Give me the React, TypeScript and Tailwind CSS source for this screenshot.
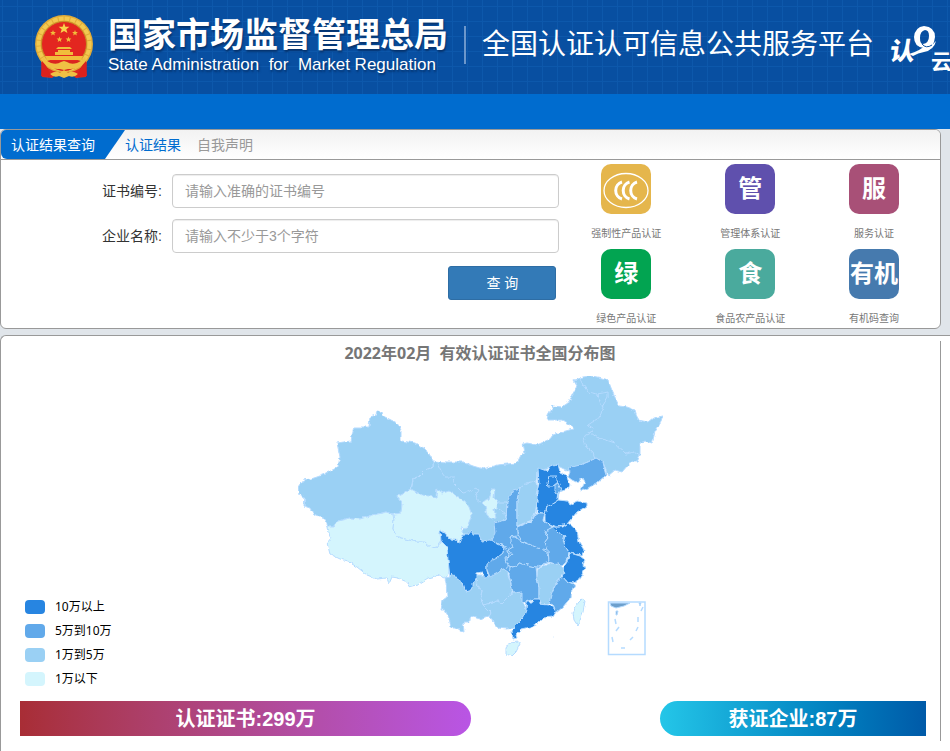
const LEVELS = {
  a: "#2785e1",
  b: "#61a9ea",
  c: "#9ad0f4",
  d: "#d4f5fd",
};

const LEGEND = [
  { color: "bg-[#2785e1]", label: "10万以上" },
  { color: "bg-[#61a9ea]", label: "5万到10万" },
  { color: "bg-[#9ad0f4]", label: "1万到5万" },
  { color: "bg-[#d4f5fd]", label: "1万以下" },
];

const CATEGORIES = [
  { mark: "CCC", label: "强制性产品认证", color: "bg-[#e5b64c]" },
  { mark: "管", label: "管理体系认证", color: "bg-[#5f50ad]" },
  { mark: "服", label: "服务认证", color: "bg-[#a85077]" },
  { mark: "绿", label: "绿色产品认证", color: "bg-[#02a451]" },
  { mark: "食", label: "食品农产品认证", color: "bg-[#4aaa9d]" },
  { mark: "有机", label: "有机码查询", color: "bg-[#467aae]" },
];

// 省份轮廓
const PROVINCES: { name: string; level: keyof typeof LEVELS; points: string }[] = [
  { name: "中部", level: "b", points: "208,185 222,172 232,165 262,165 262,195 246,204 222,206 205,212 200,208" },
  { name: "北部", level: "c", points: "143,96 157,97 173,97 183,101 193,104 207,100 227,98 231,90 235,87 233,79 237,78 247,80 260,74 263,70 272,67 283,64 280,60 272,55 257,55 258,50 263,41 272,42 278,38 285,26 287,20 284,15 293,12 302,11 312,13 318,15 323,28 329,41 337,42 345,45 348,55 358,57 363,53 373,51 371,57 365,67 362,78 355,76 350,78 350,90 347,97 342,97 338,100 332,107 325,105 318,111 313,97 306,93 278,106 268,101 248,106 247,116 230,123 217,137 216,155 206,158 207,168 201,178 191,178 181,168 170,177 178,150 170,140 147,136 121,128 123,114 128,112 135,105 143,102" },
  { name: "新疆", level: "c", points: "8,122 13,115 21,114 27,112 35,109 48,102 50,92 47,78 61,76 64,62 79,62 80,52 86,50 87,46 92,47 93,51 99,54 107,58 111,65 111,76 125,78 137,85 143,96 143,102 135,105 128,112 123,114 121,124 115,127 107,131 112,139 111,148 103,149 97,147 83,150 70,154 60,153 48,156 43,162 38,162 35,154 24,150 20,143 14,141 15,132 9,129" },
  { name: "西藏", level: "d", points: "103,149 97,147 83,150 70,154 60,153 48,156 43,162 38,162 39,168 41,173 37,178 40,189 50,194 57,196 67,202 77,210 87,214 97,213 99,219 102,212 108,213 117,217 119,222 127,220 138,213 150,210 156,213 159,207 159,195 157,182 153,177 149,179 147,182 142,183 135,177 127,177 108,172 103,164 104,155" },
  { name: "青海", level: "d", points: "121,124 132,130 146,132 147,124 153,128 159,126 167,131 175,136 179,142 182,150 177,162 171,163 175,170 170,177 166,174 160,174 154,166 150,168 151,176 149,179 147,182 142,183 135,177 127,177 108,172 103,164 104,155 103,149 111,148 112,139 107,131 115,127" },
  { name: "宁夏", level: "d", points: "202,124 205,124 204,133 208,137 207,142 204,144 206,153 202,154 197,150 195,141 192,138 199,135" },
  { name: "陕西", level: "b", points: "230,123 223,125 217,137 216,155 204,158 205,168 201,176 214,181 220,185 224,180 220,172 227,171 227,160 227,135" },
  { name: "山西", level: "c", points: "230,123 237,118 247,116 248,122 246,130 247,138 245,148 242,155 227,161 227,135" },
  { name: "贵州", level: "c", points: "187,210 188,223 193,225 191,233 193,240 202,238 208,236 212,238 220,230 222,225 220,215 218,210 218,207 212,203 208,208 202,209 195,210" },
  { name: "云南", level: "c", points: "160,212 162,207 166,213 173,218 176,227 182,225 182,218 187,214 187,218 188,223 193,225 191,233 193,240 200,245 201,250 195,252 190,254 183,252 177,257 173,257 174,267 171,266 166,262 161,262 159,253 155,245 151,245 153,235 157,232 156,218 155,213" },
  { name: "四川", level: "a", points: "150,165 155,168 160,174 166,175 170,177 173,170 178,170 182,165 183,169 189,169 191,176 200,175 214,182 213,188 205,195 197,199 197,207 199,212 195,213 192,207 187,208 187,214 182,218 182,225 176,227 173,218 166,213 162,207 160,212 158,195 157,182 151,176" },
  { name: "广西", level: "c", points: "193,240 202,238 208,236 212,238 220,230 223,228 232,227 233,237 236,245 233,253 228,258 223,263 217,264 208,263 204,258 203,254 199,252 201,248" },
  { name: "重庆", level: "b", points: "214,183 217,185 220,192 215,193 217,200 217,203 210,205 208,208 200,212 197,205 197,198 207,193 213,188" },
  { name: "湖北", level: "b", points: "220,172 226,172 232,177 250,183 258,188 259,197 246,202 237,200 229,198 227,201 220,203 215,195 222,190 218,185 223,182" },
  { name: "湖南", level: "b", points: "220,203 227,201 229,198 237,200 246,202 247,212 249,222 249,234 243,234 237,237 232,237 232,227 223,228 221,218 219,210" },
  { name: "河南", level: "b", points: "227,162 242,156 246,148 255,148 253,155 262,162 255,168 258,173 255,177 258,185 248,183 232,176 227,168" },
  { name: "安徽", level: "b", points: "257,165 263,162 268,167 275,171 273,178 279,187 276,197 272,201 259,197 258,185 255,177 258,173 255,168" },
  { name: "江西", level: "c", points: "248,204 258,199 268,198 273,203 274,208 269,214 263,224 260,238 252,239 249,235 249,222 247,212" },
  { name: "江苏", level: "a", points: "263,162 273,162 278,158 287,165 289,177 294,185 292,190 280,188 279,187 273,178 275,171 268,167" },
  { name: "浙江", level: "a", points: "280,188 290,191 295,195 293,200 295,203 293,208 287,217 283,218 277,217 272,211 274,208 273,203 277,197" },
  { name: "福建", level: "b", points: "263,225 268,215 273,212 277,217 285,219 282,225 281,232 273,242 266,248 263,240 259,238 261,230" },
  { name: "广东", level: "a", points: "237,237 242,237 243,234 250,234 250,239 258,240 263,242 266,247 263,252 253,253 248,258 240,262 231,264 226,269 227,273 223,274 222,267 224,262 233,253 236,245" },
  { name: "山东", level: "a", points: "257,142 268,135 278,136 280,140 287,136 297,138 297,141 287,147 282,153 277,159 267,162 255,157 255,150" },
  { name: "河北", level: "a", points: "248,103 257,106 260,102 268,99 270,107 276,110 280,120 278,124 269,127 268,135 257,142 255,148 247,147 247,135 247,127 249,118" },
  { name: "北京", level: "a", points: "257,118 259,112 266,112 268,117 263,121 258,121" },
  { name: "天津", level: "b", points: "265,120 268,118 271,125 268,130 265,128" },
  { name: "辽宁", level: "b", points: "278,103 290,100 298,97 306,93 313,97 316,110 307,118 298,123 290,127 295,117 293,113 286,117 282,115 278,112 280,107" },
  { name: "海南", level: "d", points: "220,277 228,276 230,279 226,287 222,291 216,289 216,283" },
  { name: "台湾", level: "d", points: "292,234 295,236 293,247 288,261 284,255 283,248 287,239" },
];

const BORDERS = [
  "147,97 152,108 155,112 164,112 163,118 173,128 178,127 185,123 189,125 185,132 192,138",
  "207,143 215,148 216,155",
  "208,137 217,137",
  "290,14 293,20 298,27 307,29 310,37 313,42 310,52 298,60 303,63 301,68 293,72 296,82 303,87 305,94",
  "307,29 318,27 318,32 312,42",
  "301,68 308,73 316,75 325,78 335,89 345,87 350,90",
];

function Emblem() {
  return (
    <svg viewBox="0 0 60 64" className="h-16 w-[60px] shrink-0" aria-label="国徽">
      <path d="M7 44 L8 62 L18 63 L24 58 L36 58 L42 63 L52 62 L53 44 Z" fill="#dc2a20" />
      <path d="M12 49 L15 62 M48 49 L45 62" stroke="#a01010" strokeWidth="1" />
      <circle cx="30" cy="29" r="29" fill="#e0aa38" />
      <circle cx="30" cy="29" r="25.5" fill="none" stroke="#f2c950" strokeWidth="4" strokeDasharray="5 1" />
      <circle cx="30" cy="29" r="22.5" fill="#e32620" stroke="#c88e25" strokeWidth="1" />
      <path d="M30 8 l1.4 3.7 4 .1 -3.1 2.5 1.1 3.8 -3.4 -2.2 -3.4 2.2 1.1 -3.8 -3.1 -2.5 4 -.1z" fill="#f8d34c" />
      <g fill="#f1bd3b">
        {["19 18", "41 18", "25.5 24.5", "34.5 24.5"].map((p) => (
          <path key={p} transform={`translate(${p})`} d="M0 -3 l.8 2 2.1 .1 -1.6 1.3 .5 2 -1.8 -1.1 -1.8 1.1 .5 -2 -1.6 -1.3 2.1 -.1z" />
        ))}
        <path d="M22 34 l2 -2 h12 l2 2z M24 35 h12 v2 h3 v3 h-18 v-3 h3z M11 41 h38 l-2 4 h-34z" />
      </g>
      <path d="M13 46 h34 l-4 5 q-6 5 -13 5 q-7 0 -13 -5z" fill="#d92620" />
      <path d="M9 42 q3 4 8 6 q6 2 10 -1 l3 -1 3 1 q4 3 10 1 q5 -2 8 -6 l1 4 q-6 9 -18 8 l-4 1 -4 -1 q-12 1 -18 -8z" fill="#efc044" />
      <path d="M16 59 q6 -4 10 -1 l4 -3 4 3 q4 -3 10 1 q-4 4 -9 2 l-5 2 -5 -2 q-5 2 -9 -2z" fill="#efc044" />
      <path d="M8 46 q7 7 9 16 l-10 -1z M52 46 q-7 7 -9 16 l10 -1z" fill="#db211d" />
    </svg>
  );
}

function CloudLogo() {
  return (
    <svg viewBox="0 0 64 48" className="h-12 w-16 shrink-0" fill="#fff">
      <text x="5" y="37" fontSize="25" fontWeight="900" transform="skewX(-8)">认</text>
      <path fillRule="evenodd" d="M35 3 Q46 4 46 14 Q45 26 35 25 Q25 24 25 14 Q26 4 35 3Z M36 7 Q31 8 31 15 Q31 21 34 21 Q40 20 40 13 Q40 7 36 7Z" />
      <path d="M20 31 Q31 28 38 21 L40 23 Q44 22 47 18 Q45 27 35 29 Q29 30 24 33Z" />
      <path d="M33 21 Q37 26 43 22" fill="none" stroke="#084fa1" strokeWidth="1" />
      <text x="42" y="46" fontSize="21" fontWeight="700">云</text>
    </svg>
  );
}

function CccMark() {
  return (
    <svg viewBox="0 0 50 50" className="size-[50px]" fill="none" stroke="#fff">
      <ellipse cx="25" cy="26.5" rx="22" ry="17" strokeWidth="1.3" />
      <g strokeWidth="3">
        <path d="M21 18 A8.500 8.800 0 0 0 21 35" />
        <path d="M28.500 18 A8.500 8.800 0 0 0 28.500 35" />
        <path d="M36 18 A8.500 8.800 0 0 0 36 35" />
      </g>
    </svg>
  );
}

function ChinaMap() {
  return (
    <svg viewBox="0 0 380 300" className="h-[300px] w-[380px] shrink-0" role="img" aria-label="有效认证证书全国分布图">
      <filter id="coast" x="0" y="0" width="100%" height="100%">
        <feTurbulence type="fractalNoise" baseFrequency="0.2" numOctaves="2" seed="4" result="noise" />
        <feDisplacementMap in="SourceGraphic" in2="noise" scale="4" xChannelSelector="R" yChannelSelector="G" />
      </filter>
      <g filter="url(#coast)" stroke="#b5dbff" strokeWidth="1" strokeLinejoin="round">
        {PROVINCES.map((p) => (
          <polygon key={p.name} points={p.points} fill={LEVELS[p.level]} />
        ))}
        {BORDERS.map((b) => (
          <polyline key={b} points={b} fill="none" />
        ))}
        <path d="M264 271 l1 2" />
      </g>
      <g stroke="#b5dbff" fill="none">
        <rect x="318.500" y="237" width="36.500" height="52.500" strokeWidth="1.500" />
        <path d="M320 238 h20 l-6 3 -8 2 -5 -2z" fill="#6c9fcc" />
        <path d="M326 246 l2 0 -1 4 -1 0z M349 238 l2 0 -1 3z" fill="#6c9fcc" />
        <path d="M325 254 l1 5 M329 262 l-3 4 M322 272 l1 5 M331 283 l4 0 M340 275 l3 -3 M346 266 l2 -4 M348 257 l0 -5 M351 246 l2 -4" strokeWidth="1.500" />
      </g>
    </svg>
  );
}

function Header() {
  return (
    <header className="overflow-hidden text-white">
      <div className="flex h-[94px] items-center bg-[#084fa1] bg-[linear-gradient(#0d58ab_1px,transparent_1px),linear-gradient(90deg,#0d58ab_1px,transparent_1px)] bg-size-[15px_15px] bg-position-[2px_6px] pl-[34px] whitespace-nowrap">
        <Emblem />
        <div className="ml-[14px] w-[340px] shrink-0 pb-1 [text-shadow:1px_2px_2px_#06336d]">
          <h1 className="text-[34px] leading-10 font-bold">国家市场监督管理总局</h1>
          <p className="text-[17px] leading-5 whitespace-pre">State Administration  for  Market Regulation</p>
        </div>
        <div className="mr-4 mb-1 ml-4 h-[38px] w-[2px] shrink-0 bg-[#6c97cb]" />
        <h2 className="mb-1 text-[28px]">全国认证认可信息公共服务平台</h2>
        <div className="ml-[15px]">
          <CloudLogo />
        </div>
      </div>
      <nav className="h-[35px] bg-[#006ccf]" />
    </header>
  );
}

function SearchPanel() {
  return (
    <section className="mr-[9px] overflow-hidden rounded-md border border-[#999] bg-white">
      <div className="flex h-[30px] items-center border-b border-[#999] bg-linear-to-b from-[#f2f2f2] to-white">
        <h3 className="flex h-full w-[124px] items-center rounded-bl-md bg-[#006ccf] pl-[10px] text-white [clip-path:polygon(0_0,100%_0,104px_100%,0_100%)]">
          认证结果查询
        </h3>
        <a href="#result" className="text-[#006ccf]">认证结果</a>
        <a href="#declare" className="ml-4 text-[#999]">自我声明</a>
      </div>
      <div className="flex h-[168px]">
        <form className="w-3/5 pt-[14px] pr-[5px]" onSubmit={(e) => e.preventDefault()}>
          <div className="flex items-center">
            <label htmlFor="certNo" className="w-[171px] shrink-0 pr-[10px] text-right text-[#333]">证书编号:</label>
            <input id="certNo" placeholder="请输入准确的证书编号" className="h-[34px] min-w-0 flex-1 rounded border border-[#ccc] px-3 shadow-[inset_0_1px_1px_rgba(0,0,0,0.075)] outline-none placeholder:text-[#999]" />
          </div>
          <div className="mt-[11px] flex items-center">
            <label htmlFor="orgName" className="w-[171px] shrink-0 pr-[10px] text-right text-[#333]">企业名称:</label>
            <input id="orgName" placeholder="请输入不少于3个字符" className="h-[34px] min-w-0 flex-1 rounded border border-[#ccc] px-3 shadow-[inset_0_1px_1px_rgba(0,0,0,0.075)] outline-none placeholder:text-[#999]" />
          </div>
          <div className="mt-[13px] flex justify-end pr-[3px]">
            <button type="submit" className="h-[34px] w-[108px] rounded-[3px] border border-[#2e6da4] bg-[#337ab7] text-white">
              查 询
            </button>
          </div>
        </form>
        <div className="grid w-2/5 grid-cols-3 content-start pt-1 pr-1">
          {CATEGORIES.map((c) => (
            <a key={c.label} href="#category" className="flex h-[85px] flex-col items-center">
              <span className={`flex size-[50px] items-center justify-center rounded-[10px] text-2xl font-bold whitespace-nowrap text-white ${c.color}`}>
                {c.mark === "CCC" ? <CccMark /> : c.mark}
              </span>
              <span className="mt-3 text-[10px] leading-[15px] text-[#777]">{c.label}</span>
            </a>
          ))}
        </div>
      </div>
    </section>
  );
}

function MapPanel() {
  return (
    <section className="mt-[6px] rounded-tl-md border-t border-l border-[#999] bg-white pt-[5px] pb-5">
      <div className="mr-[9px] border-r border-[#999] pb-[5px]">
        <div className="pr-[5px] pl-6">
          <h3 className="h-6 text-center font-['Noto_Sans','Noto_Sans_CJK_SC',sans-serif] text-base leading-6 font-bold whitespace-pre text-[#767676]">2022年02月  有效认证证书全国分布图</h3>
          <div className="flex h-[336px]">
            <ul className="flex flex-1 flex-col justify-end pb-[10px] text-xs text-black">
              {LEGEND.map((l) => (
                <li key={l.label} className="flex h-6 items-center gap-[10px] font-['Noto_Sans','Noto_Sans_CJK_SC',sans-serif]">
                  <span className={`h-[14px] w-5 rounded ${l.color}`} />
                  {l.label}
                </li>
              ))}
            </ul>
            <ChinaMap />
            <div className="flex-1" />
          </div>
        </div>
        <div className="flex justify-between pr-[14px] pl-[19px] text-xl font-bold text-white">
          <div className="flex h-[35px] w-1/2 max-w-[451px] items-center justify-center rounded-l-xs rounded-r-full bg-linear-to-r from-[#a82d35] to-[#b955e5]">
            认证证书:299万
          </div>
          <div className="flex h-[35px] w-[266px] items-center justify-center rounded-l-full bg-linear-to-r from-[#24c6e8] to-[#005aa8]">
            获证企业:87万
          </div>
        </div>
      </div>
    </section>
  );
}

export default function App() {
  return (
    <div className="min-h-screen overflow-hidden bg-[#e0e5ea] font-['Liberation_Sans','Noto_Sans_CJK_SC',sans-serif] text-sm">
      <Header />
      <main>
        <SearchPanel />
        <MapPanel />
      </main>
    </div>
  );
}
